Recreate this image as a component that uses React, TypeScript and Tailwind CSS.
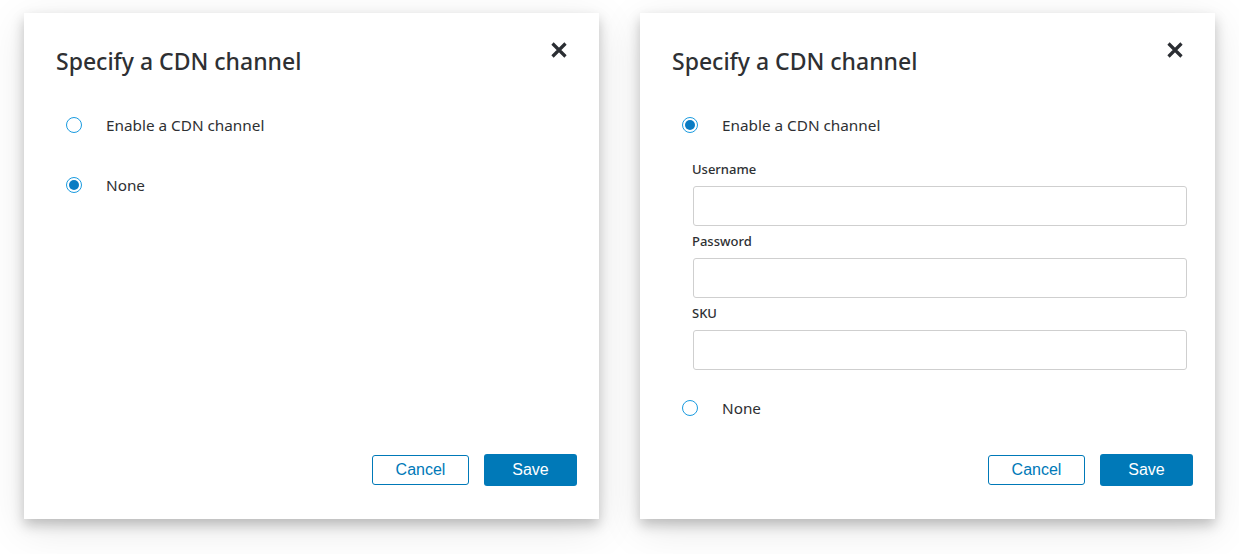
import React from "react";

function Radio({ checked }: { checked: boolean }) {
  return (
    <span className="flex h-[16px] w-[16px] shrink-0 items-center justify-center rounded-full border border-[#1a9be0] bg-white">
      {checked && <span className="h-[10px] w-[10px] rounded-full bg-[#0a7cc3]" />}
    </span>
  );
}

function CloseIcon() {
  return (
    <svg width="18" height="18" viewBox="0 0 18 18" className="block">
      <path d="M2.5 2.5 L15.5 15.5 M15.5 2.5 L2.5 15.5" stroke="#2b2e33" strokeWidth="3.2" strokeLinecap="butt" />
    </svg>
  );
}

function Option({ checked, label }: { checked: boolean; label: string }) {
  return (
    <div className="flex h-[24px] items-center pl-[10px]">
      <Radio checked={checked} />
      <span className="ml-[24px] text-[15.3px] leading-[24px] text-[#2e3033]">{label}</span>
    </div>
  );
}

function Field({ label }: { label: string }) {
  return (
    <div className="flex flex-col">
      <span className="pl-[20px] text-[13px] font-medium leading-[20px] text-[#2e3033]">{label}</span>
      <div className="ml-[21px] mt-[7px] h-[40px] w-[494px] rounded-[3px] border border-[#cfcfcf] bg-white" />
    </div>
  );
}

function Footer() {
  return (
    <div className="mt-auto flex items-center justify-end gap-[15px] pb-[33px] pr-[22px] font-['Liberation_Sans',Arial,sans-serif]">
      <button className="h-[30px] w-[97px] rounded-[3px] border border-[#0079b8] bg-white text-[16px] text-[#0079b8]">
        Cancel
      </button>
      <button className="h-[32px] w-[93px] rounded-[3px] bg-[#0079b8] text-[16px] text-white">Save</button>
    </div>
  );
}

function Dialog({ expanded }: { expanded: boolean }) {
  return (
    <div className="flex h-[506px] w-[575px] shrink-0 flex-col bg-white shadow-[0_6px_12px_rgba(0,0,0,0.22),0_10px_40px_rgba(0,0,0,0.10)] font-['Noto_Sans',sans-serif]">
      <div className="flex items-start justify-between pl-[32px] pr-[31px] pt-[32px]">
        <h2 className="text-[23px] font-medium leading-[32px] text-[#2e3033]">Specify a CDN channel</h2>
        <div className="mt-[-4px]">
          <CloseIcon />
        </div>
      </div>
      <div className="flex flex-col px-[32px] pt-[36px]">
        <Option checked={expanded} label="Enable a CDN channel" />
        {expanded ? (
          <>
            <div className="mt-[22px] flex flex-col gap-[5px]">
              <Field label="Username" />
              <Field label="Password" />
              <Field label="SKU" />
            </div>
            <div className="mt-[26px]">
              <Option checked={false} label="None" />
            </div>
          </>
        ) : (
          <div className="mt-[36px]">
            <Option checked={true} label="None" />
          </div>
        )}
      </div>
      <Footer />
    </div>
  );
}

export default function App() {
  return (
    <div className="flex h-[554px] w-[1239px] gap-[41px] bg-white pl-[24px] pt-[13px]">
      <Dialog expanded={false} />
      <Dialog expanded={true} />
    </div>
  );
}
